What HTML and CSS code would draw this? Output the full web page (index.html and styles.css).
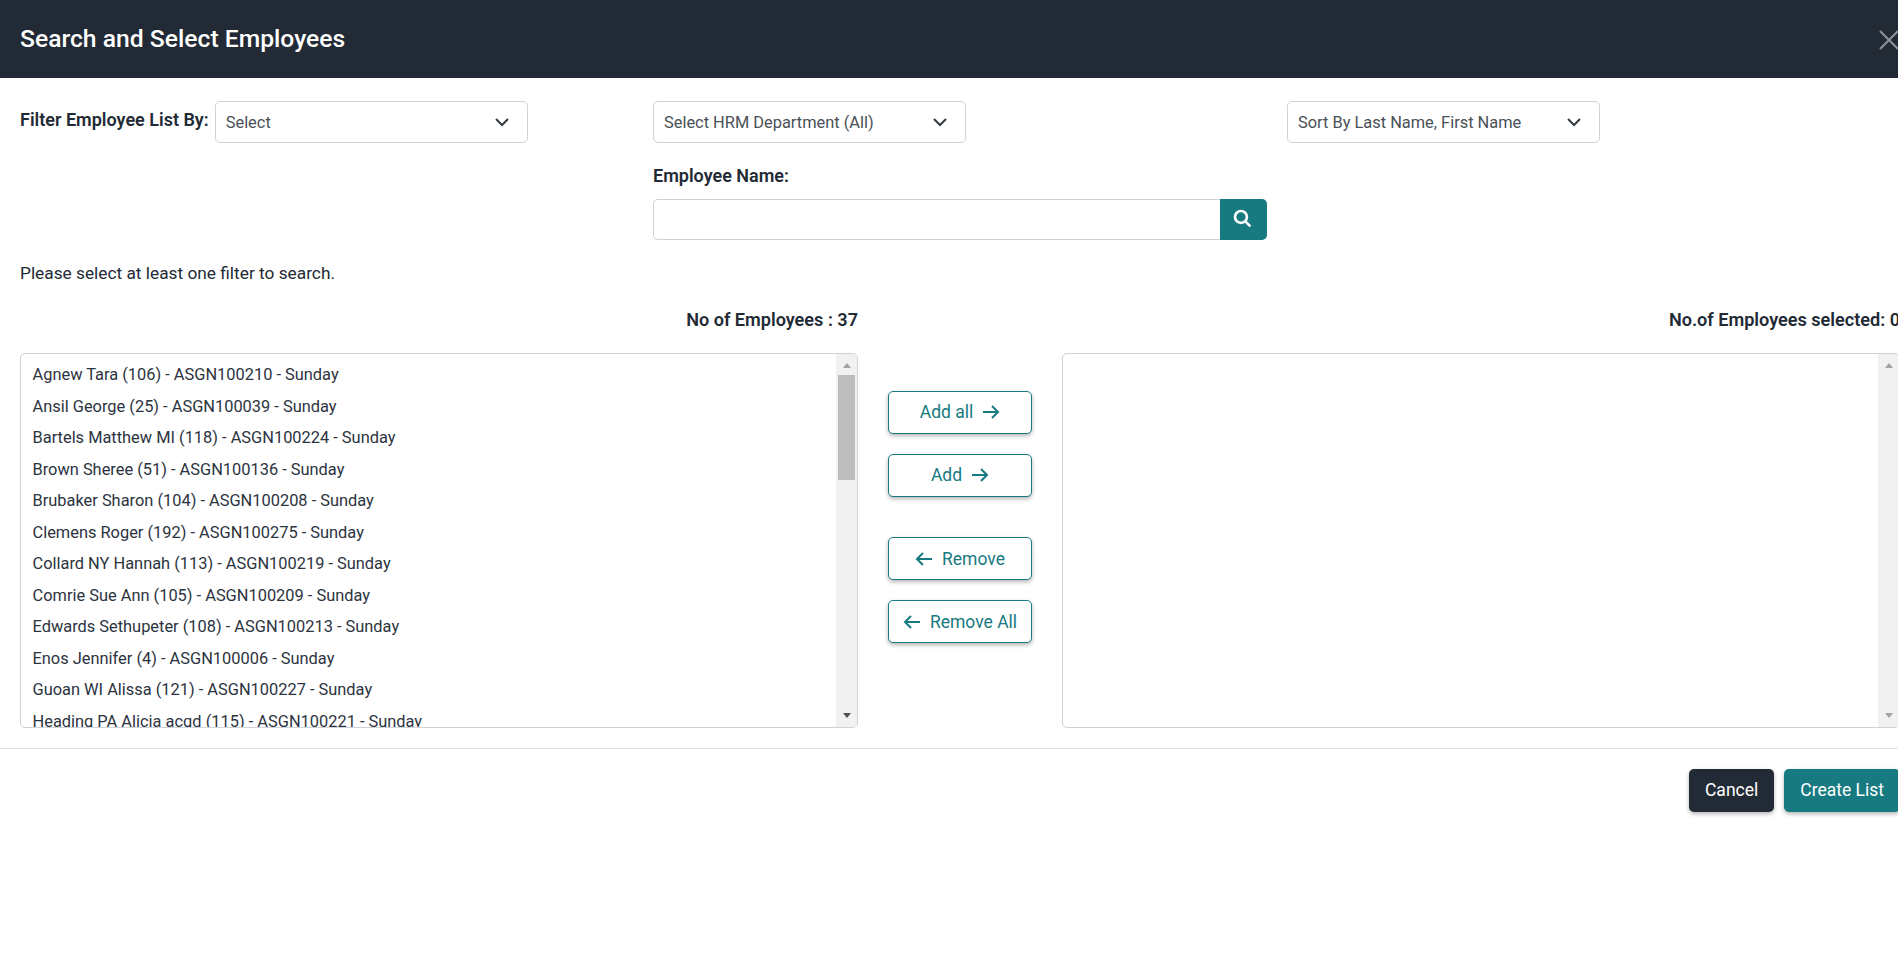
FILE: index.html
```html
<!DOCTYPE html>
<html lang="en">
<head>
<meta charset="utf-8">
<title>Search and Select Employees</title>
<link rel="stylesheet" href="styles.css">
</head>
<body>
<div class="modal">
  <header class="modal-header">
    <h1 class="modal-title">Search and Select Employees</h1>
    <svg class="close-icon" width="22" height="22" viewBox="0 0 22 22" aria-hidden="true"><path d="M2 2 L20 20 M20 2 L2 20"/></svg>
  </header>
  <main class="modal-body">
    <div class="filters">
      <div class="filter-cell">
        <label class="bold-label inline-label">Filter Employee List By:</label>
        <div class="select"><span>Select</span><svg class="chevron" width="16" height="16" viewBox="0 0 16 16"><path d="M2 5 L8 11 L14 5"/></svg></div>
      </div>
      <div class="filter-cell column">
        <div class="select"><span>Select HRM Department (All)</span><svg class="chevron" width="16" height="16" viewBox="0 0 16 16"><path d="M2 5 L8 11 L14 5"/></svg></div>
        <label class="bold-label name-label">Employee Name:</label>
        <div class="search-group">
          <input class="search-input" type="text" aria-label="Employee Name">
          <button class="search-btn" aria-label="Search"><svg width="19" height="19" viewBox="0 0 16 16"><circle cx="6.7" cy="6.7" r="5"/><path d="M10.4 10.4 L14.6 14.6"/></svg></button>
        </div>
      </div>
      <div class="filter-cell">
        <div class="select"><span>Sort By Last Name, First Name</span><svg class="chevron" width="16" height="16" viewBox="0 0 16 16"><path d="M2 5 L8 11 L14 5"/></svg></div>
      </div>
    </div>
    <p class="hint">Please select at least one filter to search.</p>
    <div class="lists">
      <div class="list-col">
        <div class="count">No of Employees : 37</div>
        <div class="listbox">
          <ul class="items">
            <li>Agnew Tara (106) - ASGN100210 - Sunday</li>
            <li>Ansil George (25) - ASGN100039 - Sunday</li>
            <li>Bartels Matthew MI (118) - ASGN100224 - Sunday</li>
            <li>Brown Sheree (51) - ASGN100136 - Sunday</li>
            <li>Brubaker Sharon (104) - ASGN100208 - Sunday</li>
            <li>Clemens Roger (192) - ASGN100275 - Sunday</li>
            <li>Collard NY Hannah (113) - ASGN100219 - Sunday</li>
            <li>Comrie Sue Ann (105) - ASGN100209 - Sunday</li>
            <li>Edwards Sethupeter (108) - ASGN100213 - Sunday</li>
            <li>Enos Jennifer (4) - ASGN100006 - Sunday</li>
            <li>Guoan WI Alissa (121) - ASGN100227 - Sunday</li>
            <li>Heading PA Alicia acqd (115) - ASGN100221 - Sunday</li>
          </ul>
          <div class="scrollbar">
            <span class="arrow-up"></span>
            <span class="thumb"></span>
            <span class="arrow-down"></span>
          </div>
        </div>
      </div>
      <div class="actions">
        <button class="btn-outline">Add all<svg class="arrow" width="18" height="16" viewBox="0 0 18 16"><path d="M1 8 H16 M10 2 L16 8 L10 14"/></svg></button>
        <button class="btn-outline">Add<svg class="arrow" width="18" height="16" viewBox="0 0 18 16"><path d="M1 8 H16 M10 2 L16 8 L10 14"/></svg></button>
        <button class="btn-outline btn-left btn-gap"><svg class="arrow" width="18" height="16" viewBox="0 0 18 16"><path d="M17 8 H2 M8 2 L2 8 L8 14"/></svg>Remove</button>
        <button class="btn-outline btn-left"><svg class="arrow" width="18" height="16" viewBox="0 0 18 16"><path d="M17 8 H2 M8 2 L2 8 L8 14"/></svg>Remove All</button>
      </div>
      <div class="list-col">
        <div class="count">No.of Employees selected: 0</div>
        <div class="listbox">
          <ul class="items"></ul>
          <div class="scrollbar">
            <span class="arrow-up"></span>
            <span class="arrow-down push"></span>
          </div>
        </div>
      </div>
    </div>
  </main>
  <footer class="modal-footer">
    <button class="btn btn-dark">Cancel</button>
    <button class="btn btn-teal">Create List</button>
  </footer>
</div>
</body>
</html>
```
FILE: styles.css
```css
* { box-sizing: border-box; }
html, body { margin: 0; height: 100%; overflow: hidden; background: #fff; }
body { font-family: Roboto, "Liberation Sans", sans-serif; font-size: 16.4px; color: #222a35; }
.modal { width: 1920px; }
.modal-header {
  height: 78px; background: #222a35; color: #fff;
  display: flex; align-items: center; justify-content: space-between;
  padding: 0 0 0 20px;
}
.modal-title { margin: 0; font-size: 24.7px; font-weight: 500; line-height: 1.2; }
.close-icon { margin-right: 20px; margin-top: 1px; }
.close-icon path { stroke: #8f949b; stroke-width: 2; fill: none; }
.modal-body { padding: 23px 20px 20px; }
.filters { display: grid; grid-template-columns: 613px 614px 613px; column-gap: 20px; }
.filter-cell { display: flex; align-items: flex-start; }
.filter-cell.column { flex-direction: column; }
.bold-label { font-weight: 600; font-size: 18px; color: #222a35; }
.inline-label { margin-top: 8px; margin-right: 6px; white-space: nowrap; }
.select {
  width: 313px; height: 42px; flex: none; border: 1px solid #ced2d9; border-radius: 5px;
  padding: 0 17px 0 10px; display: flex; align-items: center; justify-content: space-between;
  color: #495057; background: #fff;
}
.chevron path { stroke: #343a40; stroke-width: 2; fill: none; }
.name-label { margin: 21px 0 11px; line-height: 24px; }
.search-group { display: flex; width: 614px; height: 41px; }
.search-input { flex: 1; min-width: 0; border: 1px solid #ced2d9; border-right: 0; border-radius: 5px 0 0 5px; background: #fff; outline: none; }
.search-btn {
  width: 47px; border: 0; padding: 0 2px 2px 0; background: #167a80; border-radius: 0 5px 5px 0;
  display: flex; align-items: center; justify-content: center;
}
.search-btn circle, .search-btn path { stroke: #fff; stroke-width: 2.2; fill: none; }
.hint { margin: 21px 0 0; font-size: 17.3px; line-height: 24px; color: #222a35; }
.lists { display: grid; grid-template-columns: 838px 204px 838px; margin-top: 23px; }
.list-col { display: flex; flex-direction: column; }
.count { text-align: right; font-weight: 600; font-size: 18.1px; line-height: 24px; color: #222a35; margin-bottom: 21px; white-space: nowrap; }
.listbox { height: 375px; border: 1px solid #ced2d9; border-radius: 5px; display: flex; overflow: hidden; }
.items { flex: 1; min-width: 0; margin: 0; padding: 5px 12px 0 11.5px; list-style: none; overflow: hidden; }
.items li { line-height: 31.5px; white-space: nowrap; color: #2c3340; }
.scrollbar { width: 21px; flex: none; background: #f1f1f1; display: flex; flex-direction: column; align-items: center; }
.arrow-up { margin-top: 9px; width: 0; height: 0; border-left: 4px solid transparent; border-right: 4px solid transparent; border-bottom: 5px solid #a3a3a3; }
.arrow-down { margin-top: auto; margin-bottom: 9px; width: 0; height: 0; border-left: 4px solid transparent; border-right: 4px solid transparent; border-top: 5px solid #505050; }
.arrow-down.push { border-top-color: #a3a3a3; }
.thumb { width: 17px; height: 105px; background: #bdbdbd; margin-top: 7px; }
.actions { display: flex; flex-direction: column; align-items: center; padding-top: 83px; }
.btn-outline {
  width: 144px; height: 43px; margin-bottom: 20px; background: #fff; color: #167a80;
  border: 1px solid #167a80; border-radius: 5px; box-shadow: 0 2px 4px rgba(0,0,0,.3);
  font: 400 17.5px Roboto, sans-serif; display: flex; align-items: center; justify-content: center; gap: 9px; padding: 0 0 1px;
}
.btn-left { padding: 0; }
.btn-gap { margin-top: 20px; }
.arrow path { stroke: #167a80; stroke-width: 2; fill: none; }
.modal-footer {
  border-top: 1px solid #dfe1e6; display: flex; justify-content: flex-end; gap: 10px;
  padding: 20px 20px 0;
}
.btn { height: 43px; border: 0; border-radius: 5px; color: #fff; font: 400 17.5px Roboto, sans-serif; padding: 0 16px 1px; box-shadow: 0 2px 4px rgba(0,0,0,.3); }
.btn-dark { background: #222a35; }
.btn-teal { background: #167a80; }
```
